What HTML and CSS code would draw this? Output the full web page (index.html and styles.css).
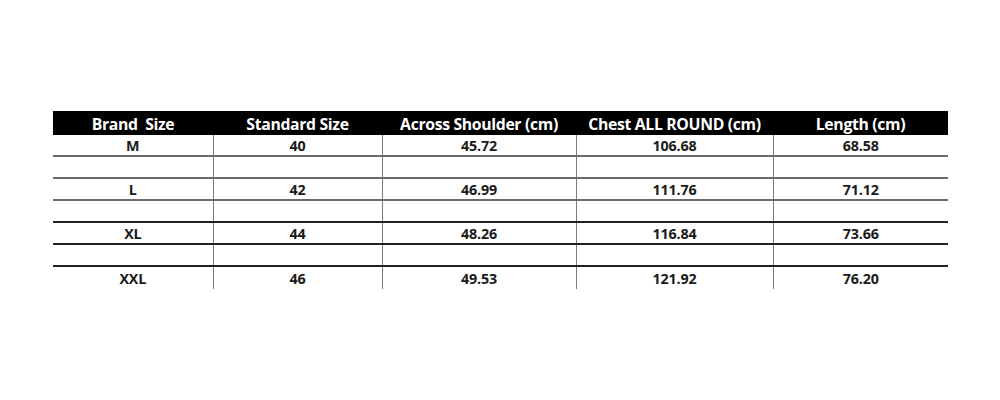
FILE: index.html
```html
<!DOCTYPE html>
<html>
<head>
<meta charset="utf-8">
<link rel="stylesheet" href="styles.css">
</head>
<body>
<div class="page">
<table class="size-table">
<colgroup>
<col class="c1"><col class="c2"><col class="c3"><col class="c4"><col class="c5">
</colgroup>
<thead>
<tr><th>Brand&nbsp; Size</th><th>Standard Size</th><th>Across Shoulder (cm)</th><th>Chest ALL ROUND (cm)</th><th>Length (cm)</th></tr>
</thead>
<tbody>
<tr><td>M</td><td>40</td><td>45.72</td><td>106.68</td><td>68.58</td></tr>
<tr class="gap"><td></td><td></td><td></td><td></td><td></td></tr>
<tr><td>L</td><td>42</td><td>46.99</td><td>111.76</td><td>71.12</td></tr>
<tr class="gap dark"><td></td><td></td><td></td><td></td><td></td></tr>
<tr class="dark"><td>XL</td><td>44</td><td>48.26</td><td>116.84</td><td>73.66</td></tr>
<tr class="gap dark"><td></td><td></td><td></td><td></td><td></td></tr>
<tr class="last"><td>XXL</td><td>46</td><td>49.53</td><td>121.92</td><td>76.20</td></tr>
</tbody>
</table>
</div>
</body>
</html>
```

FILE: styles.css
```css
html, body {
  margin: 0;
  padding: 0;
  background: #fff;
}
.page {
  padding: 111px 0 0 53px;
}
.size-table {
  border-collapse: collapse;
  table-layout: fixed;
  width: 895px;
  font-family: "Open Sans", "Liberation Sans", sans-serif;
  font-weight: 700;
  color: #1a1a1a;
}
.c1 { width: 160px; }
.c2 { width: 169px; }
.c3 { width: 194px; }
.c4 { width: 197px; }
.c5 { width: 175px; }
.size-table th {
  background: #000;
  color: #fff;
  height: 22px;
  padding: 2px 0 0;
  font-size: 15.8px;
  font-weight: 700;
  letter-spacing: -0.35px;
  text-align: center;
  line-height: 22px;
}
.size-table td {
  height: 19px;
  padding: 1px 0 0;
  font-size: 14.3px;
  letter-spacing: -0.2px;
  text-align: center;
  line-height: 19px;
  border-left: 1px solid #7a7a7a;
  border-bottom: 2px solid #6a6a6a;
}
.size-table td:first-child {
  border-left: none;
}
.size-table tr.dark td {
  border-bottom-color: #222;
}
.size-table tr.last td {
  border-bottom: none;
  height: 21px;
}
```
